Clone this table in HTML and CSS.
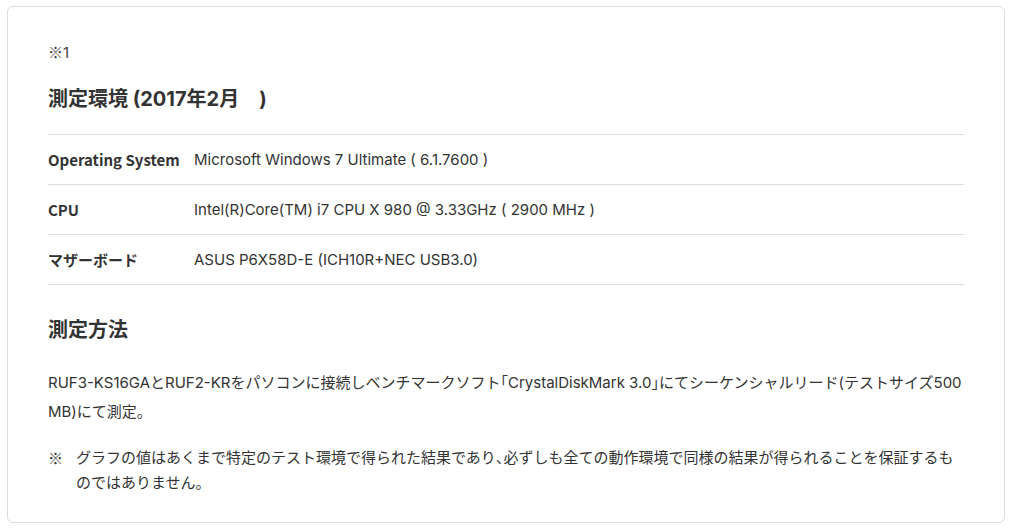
FILE: index.html
```html
<!DOCTYPE html>
<html lang="ja">
<head>
<meta charset="utf-8">
<link rel="stylesheet" href="styles.css">
</head>
<body>
<div class="card">
  <p class="mark"><span class="kome">※</span>1</p>
  <h2 class="heading">測定環境 (2017年2月　)</h2>
  <table class="spec">
    <tr><th>Operating System</th><td>Microsoft Windows 7 Ultimate ( 6.1.7600 )</td></tr>
    <tr><th>CPU</th><td>Intel(R)Core(TM) i7 CPU X 980 @ 3.33GHz ( 2900 MHz )</td></tr>
    <tr><th>マザーボード</th><td>ASUS P6X58D-E (ICH10R+NEC USB3.0)</td></tr>
  </table>
  <h2 class="heading heading-method">測定方法</h2>
  <p class="desc">RUF3-KS16GAとRUF2-KRをパソコンに接続しベンチマークソフト<span class="punct">「</span>CrystalDiskMark 3.0<span class="punct">」</span>にてシーケンシャルリード(テストサイズ500 MB)にて測定。</p>
  <div class="note">
    <span class="note-mark kome">※</span>
    <p class="note-text">グラフの値はあくまで特定のテスト環境で得られた結果であり<span class="punct">、</span>必ずしも全ての動作環境で同様の結果が得られることを保証するものではありません。</p>
  </div>
</div>
</body>
</html>
```

FILE: styles.css
```css
html, body {
  margin: 0;
  background: #fff;
}
body {
  padding: 6px 14px 8px 7px;
  font-family: Inter, "Noto Sans CJK JP", sans-serif;
  color: #333;
  font-size: 15px;
}
.card {
  border: 1px solid #dcdcdc;
  border-radius: 6px;
  padding: 33px 40px 27px 40px;
}
.kome {
  font-family: "Noto Sans CJK JP", sans-serif;
}
.mark {
  margin: 0;
  line-height: 24px;
  color: #444;
}
.heading {
  margin: 20px 0 0;
  font-size: 20px;
  font-weight: bold;
  line-height: 29px;
  color: #333;
}
.spec {
  width: 100%;
  margin-top: 20px;
  border-collapse: collapse;
  border-top: 1px solid #dcdcdc;
}
.spec tr {
  border-bottom: 1px solid #dcdcdc;
}
.spec th, .spec td {
  height: 49px;
  padding: 0;
  text-align: left;
  vertical-align: middle;
  font-size: 15px;
}
.spec th {
  width: 146px;
  font-weight: bold;
  font-family: "Noto Sans CJK JP", sans-serif;
}
.heading-method {
  margin-top: 31px;
}
.desc {
  margin: 23px 0 0;
  line-height: 29px;
}
.punct {
  font-feature-settings: "halt";
}
.note {
  display: flex;
  margin-top: 19px;
  line-height: 25px;
}
.note-mark {
  flex: 0 0 28px;
}
.note-text {
  margin: 0;
  flex: 1;
}
```
